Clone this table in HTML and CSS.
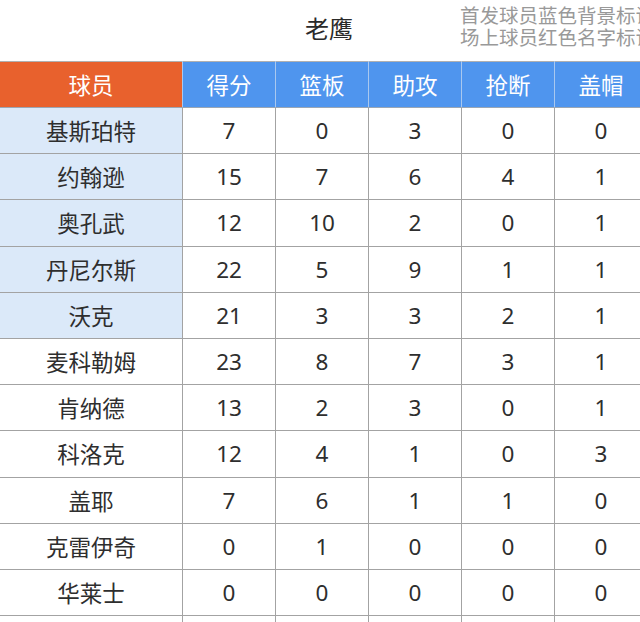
FILE: index.html
```html
<!DOCTYPE html>
<html lang="zh">
<head>
<meta charset="utf-8">
<link rel="stylesheet" href="styles.css">
</head>
<body>
<div class="page">
  <div class="top">
    <div class="title">老鹰</div>
    <div class="note">首发球员蓝色背景标识<br>场上球员红色名字标识</div>
  </div>
  <table class="stats">
    <colgroup>
      <col class="c-name"><col class="c-num"><col class="c-num"><col class="c-num"><col class="c-num"><col class="c-num">
    </colgroup>
    <thead>
      <tr><th class="h-name">球员</th><th>得分</th><th>篮板</th><th>助攻</th><th>抢断</th><th>盖帽</th></tr>
    </thead>
    <tbody>
      <tr><td class="name starter">基斯珀特</td><td>7</td><td>0</td><td>3</td><td>0</td><td>0</td></tr>
      <tr><td class="name starter">约翰逊</td><td>15</td><td>7</td><td>6</td><td>4</td><td>1</td></tr>
      <tr><td class="name starter">奥孔武</td><td>12</td><td>10</td><td>2</td><td>0</td><td>1</td></tr>
      <tr><td class="name starter">丹尼尔斯</td><td>22</td><td>5</td><td>9</td><td>1</td><td>1</td></tr>
      <tr><td class="name starter">沃克</td><td>21</td><td>3</td><td>3</td><td>2</td><td>1</td></tr>
      <tr><td class="name">麦科勒姆</td><td>23</td><td>8</td><td>7</td><td>3</td><td>1</td></tr>
      <tr><td class="name">肯纳德</td><td>13</td><td>2</td><td>3</td><td>0</td><td>1</td></tr>
      <tr><td class="name">科洛克</td><td>12</td><td>4</td><td>1</td><td>0</td><td>3</td></tr>
      <tr><td class="name">盖耶</td><td>7</td><td>6</td><td>1</td><td>1</td><td>0</td></tr>
      <tr><td class="name">克雷伊奇</td><td>0</td><td>1</td><td>0</td><td>0</td><td>0</td></tr>
      <tr><td class="name">华莱士</td><td>0</td><td>0</td><td>0</td><td>0</td><td>0</td></tr>
      <tr><td class="name">&nbsp;</td><td></td><td></td><td></td><td></td><td></td></tr>
    </tbody>
  </table>
</div>
</body>
</html>
```

FILE: styles.css
```css
html, body {
  margin: 0;
  padding: 0;
  background: #ffffff;
  overflow: hidden;
}
body {
  font-family: "Noto Sans", "Noto Sans CJK SC", sans-serif;
  color: #333333;
}
.page {
  width: 680px;
}
.top {
  height: 61px;
  display: flex;
  align-items: flex-start;
  box-sizing: border-box;
}
.title {
  margin-left: 305px;
  margin-top: 12px;
  font-size: 24px;
  line-height: 34px;
  color: #2a2a2a;
  width: 155px;
  flex: none;
}
.note {
  margin-top: 5px;
  font-size: 19.5px;
  line-height: 22px;
  color: #999999;
  white-space: nowrap;
  flex: none;
}
.stats {
  border-collapse: collapse;
  table-layout: fixed;
  width: 647px;
  margin-left: -1px;
}
.c-name { width: 183px; }
.c-num { width: 93px; }
.stats th {
  height: 45px;
  font-weight: normal;
  font-size: 22.5px;
  color: #ffffff;
  background: #4f95ee;
  border: 1px solid #a9c8ef;
  border-top: 1px solid #b0b0b0;
  border-bottom: 1px solid #9aa6b4;
  padding: 0;
  text-align: center;
}
.stats th.h-name {
  background: #e8612d;
  border-left-color: #e8612d;
}
.stats td {
  height: 45.2px;
  padding: 0;
  font-size: 22.5px;
  text-align: center;
  border: 1px solid #a3a3a3;
  color: #2e2e2e;
}
.stats td.starter {
  background: #dbe9f9;
}
```
